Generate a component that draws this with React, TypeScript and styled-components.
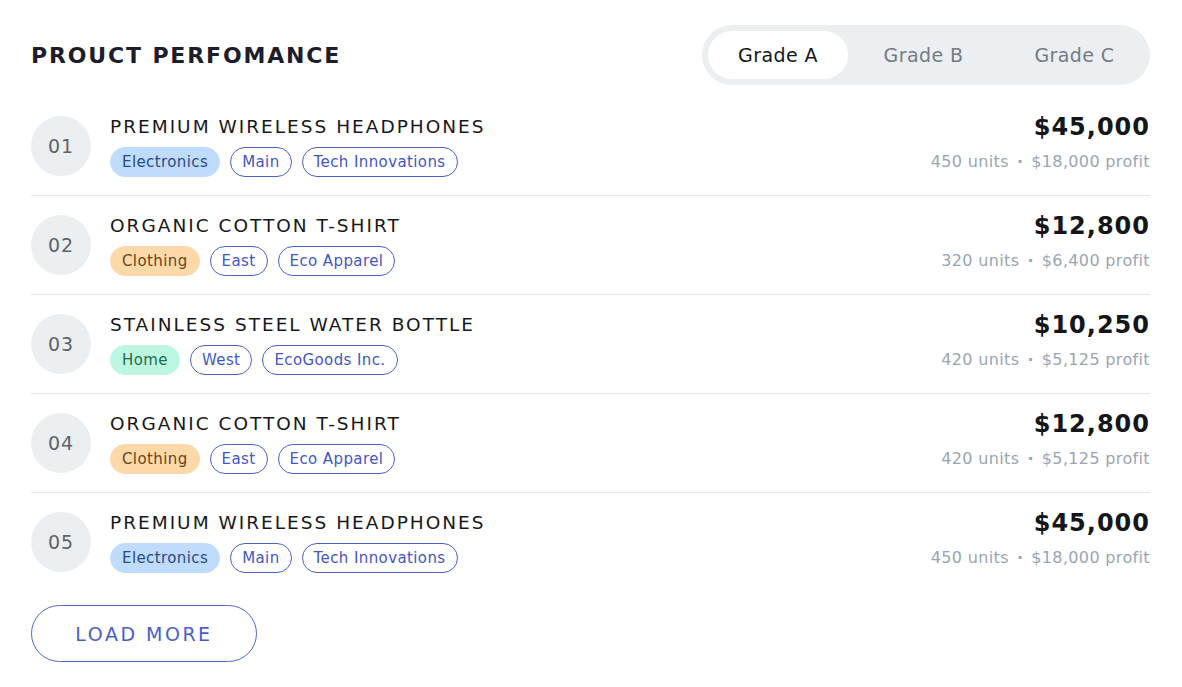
import styled, { createGlobalStyle } from "styled-components";

const Global = createGlobalStyle`
  body {
    margin: 0;
    background: #ffffff;
    font-family: "DejaVu Sans", "Liberation Sans", sans-serif;
  }
`;

type TagKind = "blue" | "orange" | "green" | "outline";

const products = [
  { no: "01", name: "PREMIUM WIRELESS HEADPHONES", cat: "Electronics", kind: "blue" as TagKind, region: "Main", brand: "Tech Innovations", price: "$45,000", units: "450 units", profit: "$18,000 profit" },
  { no: "02", name: "ORGANIC COTTON T-SHIRT", cat: "Clothing", kind: "orange" as TagKind, region: "East", brand: "Eco Apparel", price: "$12,800", units: "320 units", profit: "$6,400 profit" },
  { no: "03", name: "STAINLESS STEEL WATER BOTTLE", cat: "Home", kind: "green" as TagKind, region: "West", brand: "EcoGoods Inc.", price: "$10,250", units: "420 units", profit: "$5,125 profit" },
  { no: "04", name: "ORGANIC COTTON T-SHIRT", cat: "Clothing", kind: "orange" as TagKind, region: "East", brand: "Eco Apparel", price: "$12,800", units: "420 units", profit: "$5,125 profit" },
  { no: "05", name: "PREMIUM WIRELESS HEADPHONES", cat: "Electronics", kind: "blue" as TagKind, region: "Main", brand: "Tech Innovations", price: "$45,000", units: "450 units", profit: "$18,000 profit" },
];

export default function App() {
  return (
    <>
      <Global />
      <Page>
        <Header>
          <Title>PROUCT PERFOMANCE</Title>
          <Tabs>
            <Tab $active>Grade A</Tab>
            <Tab>Grade B</Tab>
            <Tab>Grade C</Tab>
          </Tabs>
        </Header>
        <List>
          {products.map((p) => (
            <Row key={p.no}>
              <Rank>{p.no}</Rank>
              <Info>
                <Name>{p.name}</Name>
                <Tags>
                  <Tag $kind={p.kind}>{p.cat}</Tag>
                  <Tag $kind="outline">{p.region}</Tag>
                  <Tag $kind="outline">{p.brand}</Tag>
                </Tags>
              </Info>
              <Figures>
                <Price>{p.price}</Price>
                <Meta>
                  {p.units}
                  <Dot>·</Dot>
                  {p.profit}
                </Meta>
              </Figures>
            </Row>
          ))}
        </List>
        <LoadMore>LOAD MORE</LoadMore>
      </Page>
    </>
  );
}

const Page = styled.div`
  padding: 25px 32px 20px 31px;
`;

const Header = styled.div`
  display: flex;
  justify-content: space-between;
  align-items: center;
  height: 60px;
  margin-bottom: 12px;
`;

const Title = styled.h1`
  margin: 0;
  font-size: 22px;
  font-weight: 700;
  color: #1d1d2c;
  letter-spacing: 1.85px;
`;

const Tabs = styled.div`
  display: flex;
  align-items: center;
  width: 448px;
  height: 60px;
  box-sizing: border-box;
  padding: 6px 0 6px 6px;
  border-radius: 30px;
  background: #eceff2;
`;

const Tab = styled.div<{ $active?: boolean }>`
  flex: ${(p) => (p.$active ? "0 0 140px" : "1 1 0")};
  height: 48px;
  display: flex;
  align-items: center;
  justify-content: center;
  border-radius: 24px;
  font-size: 19px;
  letter-spacing: 0.4px;
  color: ${(p) => (p.$active ? "#15161a" : "#757b84")};
  background: ${(p) => (p.$active ? "#ffffff" : "transparent")};
`;

const List = styled.div`
  display: flex;
  flex-direction: column;
`;

const Row = styled.div`
  display: flex;
  align-items: center;
  padding: 19px 0;
  border-bottom: 1px solid #e3e6ea;
  &:last-child {
    border-bottom: none;
  }
`;

const Rank = styled.div`
  width: 60px;
  height: 60px;
  flex: none;
  border-radius: 50%;
  background: #eceff2;
  display: flex;
  align-items: center;
  justify-content: center;
  font-size: 19px;
  letter-spacing: 1px;
  color: #5f646b;
  margin-right: 19px;
`;

const Info = styled.div`
  flex: 1;
  display: flex;
  flex-direction: column;
  gap: 8px;
  margin: -1px 0;
`;

const Name = styled.div`
  font-size: 18.5px;
  line-height: 24px;
  color: #17181c;
  letter-spacing: 2px;
`;

const Tags = styled.div`
  display: flex;
  gap: 10px;
`;

const tagColors: Record<TagKind, { bg: string; fg: string; border: string }> = {
  blue: { bg: "#bfdcfd", fg: "#2b4a86", border: "#bfdcfd" },
  orange: { bg: "#fdd9aa", fg: "#6b4418", border: "#fdd9aa" },
  green: { bg: "#bdf7e2", fg: "#1f6b4c", border: "#bdf7e2" },
  outline: { bg: "#ffffff", fg: "#4457c4", border: "#4f60c9" },
};

const Tag = styled.span<{ $kind: TagKind }>`
  height: 30px;
  box-sizing: border-box;
  display: inline-flex;
  align-items: center;
  padding: 0 11px;
  border-radius: 15px;
  font-size: 15px;
  font-weight: 500;
  letter-spacing: 0.4px;
  background: ${(p) => tagColors[p.$kind].bg};
  color: ${(p) => tagColors[p.$kind].fg};
  border: 1.5px solid ${(p) => tagColors[p.$kind].border};
`;

const Figures = styled.div`
  display: flex;
  flex-direction: column;
  align-items: flex-end;
  gap: 8px;
  margin: -1px 0;
`;

const Price = styled.div`
  font-size: 24px;
  line-height: 24px;
  font-weight: 700;
  letter-spacing: 1px;
  color: #15161a;
`;

const Meta = styled.div`
  font-size: 16px;
  line-height: 30px;
  letter-spacing: 0.35px;
  color: #9aa5b3;
`;

const Dot = styled.span`
  margin: 0 8px;
  font-weight: 700;
`;

const LoadMore = styled.button`
  margin-top: 14px;
  width: 226px;
  height: 57px;
  border-radius: 29px;
  border: 1.5px solid #5468cf;
  background: #ffffff;
  color: #4a5ec9;
  font-family: "DejaVu Sans", "Liberation Sans", sans-serif;
  font-size: 19px;
  letter-spacing: 2.5px;
  cursor: pointer;
`;
